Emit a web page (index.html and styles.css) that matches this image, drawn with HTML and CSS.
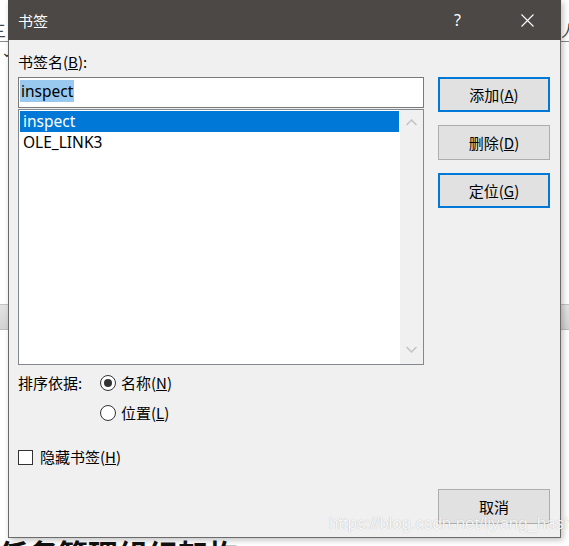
FILE: index.html
```html
<!DOCTYPE html>
<html lang="zh-CN">
<head>
<meta charset="utf-8">
<title>书签</title>
<link rel="stylesheet" href="styles.css">
</head>
<body>
<div class="doc">
  <div class="doc-top"><span class="frag-l">三</span><span class="frag-r">人</span></div>
  <div class="doc-mid"><span class="frag-chev">&#8964;</span></div>
  <div class="doc-band"></div>
  <div class="doc-space"></div>
  <div class="doc-heading">任务管理组织架构</div>
</div>

<div class="dialog">
  <div class="titlebar">
    <span class="title">书签</span>
    <span class="help">?</span>
    <span class="close">
      <svg width="13" height="13" viewBox="0 0 13 13"><path d="M0.5 0.5 L12.5 12.5 M12.5 0.5 L0.5 12.5" stroke="#fff" stroke-width="1.1" fill="none"/></svg>
    </span>
  </div>
  <div class="body">
    <div class="left">
      <div class="label">书签名(<u>B</u>):</div>
      <div class="input"><span class="sel-text">inspect</span></div>
      <div class="list">
        <div class="items">
          <div class="item selected">inspect</div>
          <div class="item">OLE_LINK3</div>
        </div>
        <div class="scrollbar">
          <svg class="chev" width="11" height="7" viewBox="0 0 11 7"><path d="M0.5 6 L5.5 1 L10.5 6" stroke="#c2c2c2" stroke-width="1.5" fill="none"/></svg>
          <svg class="chev" width="11" height="7" viewBox="0 0 11 7"><path d="M0.5 1 L5.5 6 L10.5 1" stroke="#c2c2c2" stroke-width="1.5" fill="none"/></svg>
        </div>
      </div>
      <div class="sort">
        <div class="sort-label">排序依据:</div>
        <div class="radios">
          <div class="radio-row"><span class="radio on"></span><span>名称(<u>N</u>)</span></div>
          <div class="radio-row"><span class="radio"></span><span>位置(<u>L</u>)</span></div>
        </div>
      </div>
      <div class="check-row"><span class="checkbox"></span><span>隐藏书签(<u>H</u>)</span></div>
    </div>
    <div class="right">
      <div class="btn default">添加(<u>A</u>)</div>
      <div class="btn">删除(<u>D</u>)</div>
      <div class="btn default">定位(<u>G</u>)</div>
      <div class="btn cancel">取消</div>
    </div>
  </div>
  <div class="watermark">https://blog.csdn.net/liyang_hash</div>
</div>
</body>
</html>
```
FILE: styles.css
```css
* { box-sizing: border-box; }
html, body { margin: 0; padding: 0; }
body {
  width: 569px;
  height: 546px;
  overflow: hidden;
  background: #ffffff;
  position: relative;
  font-family: "Noto Sans", "Noto Sans CJK SC", sans-serif;
  font-size: 15px;
  color: #000;
}

/* background document */
.doc { display: flex; flex-direction: column; }
.doc-top {
  height: 42px;
  border-bottom: 1px solid #8a8a8a;
  display: flex;
  justify-content: space-between;
  align-items: flex-end;
  font-family: "Noto Sans CJK SC", sans-serif;
  font-size: 16px;
  color: #444;
}
.frag-l { margin-left: -10px; line-height: 22px; }
.frag-r { margin-right: -8px; line-height: 22px; }
.doc-mid { height: 262px; font-size: 14px; color: #333; }
.frag-chev { margin-left: 1px; }
.doc-band {
  height: 26px;
  background: linear-gradient(#e3e3e3, #d3d3d3);
  border-top: 1px solid #c4c4c4;
  border-bottom: 1px solid #bcbcbc;
}
.doc-space { height: 205px; }
.doc-heading {
  font-family: "Noto Sans CJK SC", sans-serif;
  font-weight: 700;
  font-size: 30px;
  line-height: 36px;
  margin-left: -2px;
  color: #111;
}

/* dialog window */
.dialog {
  position: absolute;
  left: 8px;
  top: 0;
  width: 553px;
  height: 538px;
  background: #f0f0f0;
  border: 1px solid #6a6a6a;
  border-top: none;
  box-shadow: 2px 2px 6px rgba(0,0,0,0.25);
  display: flex;
  flex-direction: column;
}
.titlebar {
  height: 40px;
  background: #4b4845;
  color: #fff;
  display: flex;
  align-items: center;
  padding-left: 9px;
  margin: 0 -1px;
  font-family: "Noto Sans CJK SC", sans-serif;
}
.title { font-size: 15px; flex: 1; padding-left: 1px; }
.help { font-family: "Noto Sans", sans-serif; font-size: 16px; width: 14px; margin-right: 53px; }
.close { display: flex; width: 13px; margin-right: 27px; }

.body {
  flex: 1;
  display: flex;
  gap: 14px;
  padding: 12px 9px 13px 9px;
  font-family: "Noto Sans CJK SC", sans-serif;
}
.left { width: 406px; display: flex; flex-direction: column; }
.label { line-height: 20px; height: 20px; margin-bottom: 5px; }
.input {
  height: 31px;
  background: #fff;
  border: 1px solid #7a7a7a;
  padding: 2px 1px;
  font-family: "Noto Sans", sans-serif;
  font-size: 15.5px;
}
.sel-text {
  display: inline-block;
  background: #99c9ef;
  line-height: 22px;
  height: 22px;
  padding: 0 1px;
}
.list {
  margin-top: 1px;
  height: 256px;
  background: #fff;
  border: 1px solid #828790;
  display: flex;
  font-family: "Noto Sans", sans-serif;
  font-size: 15.5px;
}
.items { flex: 1; padding: 1px; }
.item { height: 21px; line-height: 21px; padding-left: 3px; }
.item.selected { background: #0078d7; color: #fff; }
.scrollbar {
  width: 23px;
  background: #f0f0f0;
  display: flex;
  flex-direction: column;
  justify-content: space-between;
  align-items: center;
  padding: 9px 0 11px 0;
}
.chev { display: block; }

.sort { display: flex; margin-top: 8px; }
.sort-label { width: 82px; line-height: 20px; }
.radios { display: flex; flex-direction: column; gap: 10px; }
.radio-row { display: flex; align-items: center; gap: 5px; line-height: 20px; }
.radio {
  width: 16px; height: 16px;
  border: 1px solid #333;
  border-radius: 50%;
  background: #fff;
  display: flex; align-items: center; justify-content: center;
}
.radio.on::after {
  content: "";
  width: 8px; height: 8px;
  border-radius: 50%;
  background: #333;
}
.check-row { display: flex; align-items: center; gap: 7px; margin-top: 24px; line-height: 20px; }
.checkbox { width: 15px; height: 15px; border: 1px solid #333; background: #fff; }

.right { width: 112px; display: flex; flex-direction: column; gap: 13px; padding-top: 25px; }
.btn {
  height: 35px;
  background: #e1e1e1;
  border: 1px solid #adadad;
  display: flex; align-items: center; justify-content: center;
  line-height: 20px;
}
.btn.default { border: 2px solid #0078d7; }
.btn.cancel { margin-top: auto; height: 35px; }

.watermark {
  position: absolute;
  left: 320px;
  top: 514px;
  font-family: "Liberation Sans", sans-serif;
  font-size: 17px;
  color: rgba(255,255,255,0.92);
  text-shadow: 0 0 1px rgba(0,0,0,0.3);
  white-space: nowrap;
  letter-spacing: -0.1px;
}
```
